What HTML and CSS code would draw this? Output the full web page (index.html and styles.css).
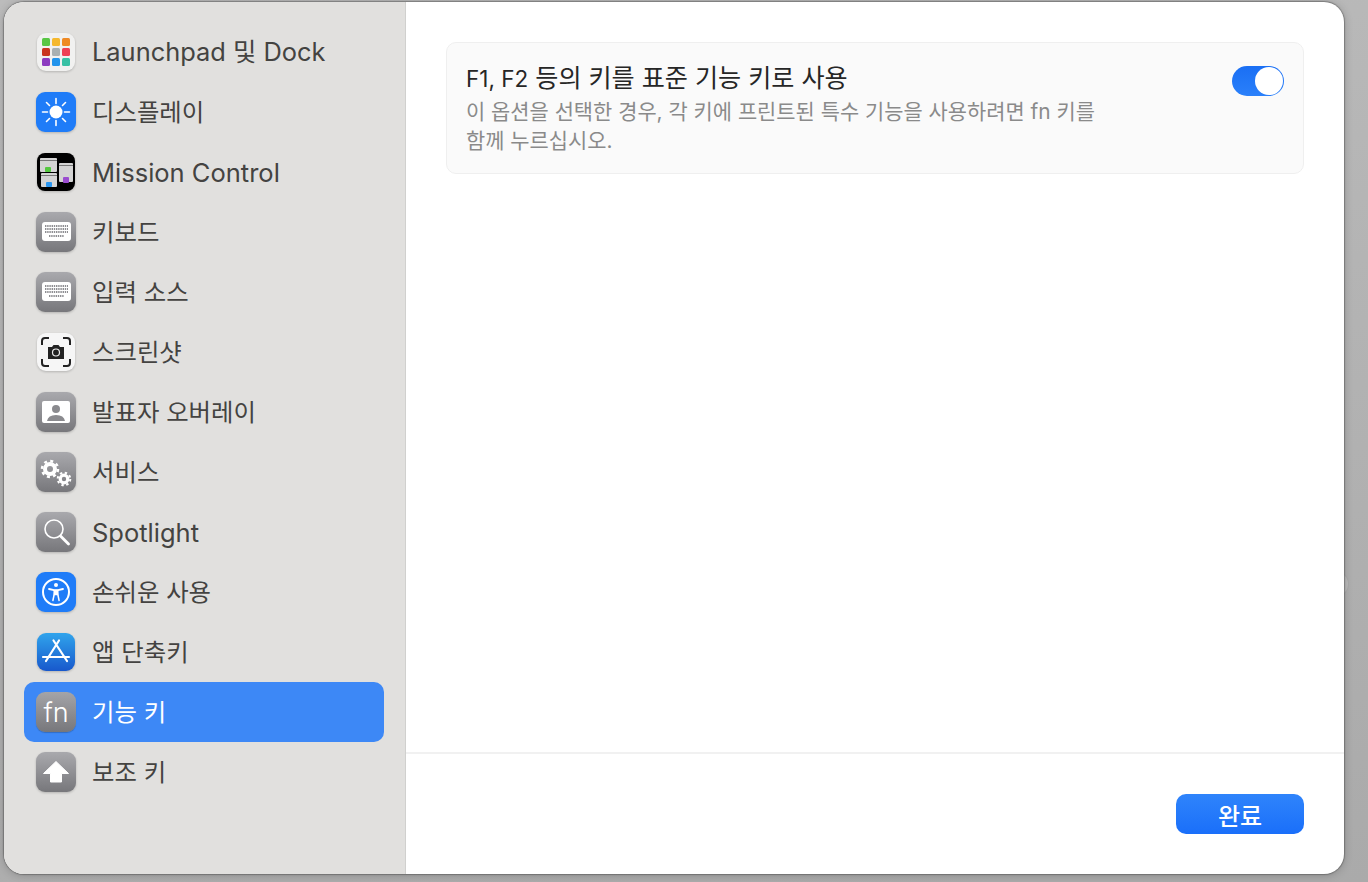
FILE: index.html
```html
<!DOCTYPE html>
<html lang="ko">
<head>
<meta charset="utf-8">
<title>기능 키</title>
<link rel="stylesheet" href="styles.css">
</head>
<body>
	<div class="peek"></div>
	<div class="window">
		<div class="sidebar">
			<div class="item mixed">
				<svg class="icon" viewBox="0 0 40 40">
					<rect x="1" y="1" width="38" height="38" rx="9" fill="#f1f1f0"/>
					<rect x="6" y="6" width="8" height="8" rx="1.500" fill="#58c644"/>
					<rect x="16" y="6" width="8" height="8" rx="1.500" fill="#f5b82e"/>
					<rect x="26" y="6" width="8" height="8" rx="1.500" fill="#ee8a24"/>
					<rect x="6" y="16" width="8" height="8" rx="1.500" fill="#c9351f"/>
					<rect x="16" y="16" width="8" height="8" rx="1.500" fill="#a8b0b2"/>
					<rect x="26" y="16" width="8" height="8" rx="1.500" fill="#ee4054"/>
					<rect x="6" y="26" width="8" height="8" rx="1.500" fill="#8c3cc0"/>
					<rect x="16" y="26" width="8" height="8" rx="1.500" fill="#2294ec"/>
					<rect x="26" y="26" width="8" height="8" rx="1.500" fill="#38c0a4"/>
				</svg>
				<span>Launchpad 및 Dock</span>
			</div>
			<div class="item">
				<svg class="icon" viewBox="0 0 40 40">
					<rect width="40" height="40" rx="9" fill="#1f7cf8"/>
					<circle cx="20" cy="20" r="6.500" fill="#fff"/>
					<path d="M20 6.500v5M20 28.500v5M6.500 20h5M28.500 20h5M10.500 10.500l3 3M26.500 26.500l3 3M29.500 10.500l-3 3M13.500 26.500l-3 3" stroke="#fff" stroke-width="1.600" stroke-linecap="round"/>
				</svg>
				<span>디스플레이</span>
			</div>
			<div class="item latin">
				<svg class="icon" viewBox="0 0 40 40">
					<rect x="1" y="1" width="38" height="38" rx="8" fill="#000"/>
					<rect x="4" y="6" width="17" height="14" rx="1" fill="#d4d4d4"/>
					<rect x="4" y="8" width="17" height="1" fill="#777"/>
					<rect x="5" y="21" width="16" height="14" rx="1" fill="#d4d4d4"/>
					<rect x="5" y="23" width="16" height="1" fill="#777"/>
					<rect x="23" y="11" width="14" height="19" rx="1" fill="#d4d4d4"/>
					<rect x="23" y="13" width="14" height="1" fill="#777"/>
					<rect x="9" y="15" width="6" height="5" rx="1" fill="#55c840"/>
					<rect x="10" y="30" width="6" height="5" rx="1" fill="#2a96f0"/>
					<rect x="27" y="25" width="6" height="6" rx="1" fill="#9a4cd0"/>
				</svg>
				<span>Mission Control</span>
			</div>
			<div class="item">
				<svg class="icon" viewBox="0 0 40 40">
					<rect width="40" height="40" rx="9" fill="url(#grey)"/>
					<rect x="6" y="10" width="29" height="19" rx="3" fill="#fff"/>
					<path d="M9 14h23M9 17h23M9 20h23M13 24h15" stroke="#8e8e92" stroke-width="1.800" stroke-dasharray="1.400 .8"/>
				</svg>
				<span>키보드</span>
			</div>
			<div class="item">
				<svg class="icon" viewBox="0 0 40 40">
					<rect width="40" height="40" rx="9" fill="url(#grey)"/>
					<rect x="6" y="10" width="29" height="19" rx="3" fill="#fff"/>
					<path d="M9 14h23M9 17h23M9 20h23M13 24h15" stroke="#8e8e92" stroke-width="1.800" stroke-dasharray="1.400 .8"/>
				</svg>
				<span>입력 소스</span>
			</div>
			<div class="item">
				<svg class="icon" viewBox="0 0 40 40">
					<rect x="1" y="1" width="38" height="38" rx="9" fill="#f6f6f6"/>
					<path d="M6 13V9q0-3 3-3h4M27 6h4q3 0 3 3v4M34 27v4q0 3-3 3h-4M13 34H9q-3 0-3-3v-4" fill="none" stroke="#222" stroke-width="2"/>
					<path d="M12 15h4l1.500-2h5l1.500 2h4v12H12z" fill="#222"/>
					<circle cx="20" cy="20.500" r="3.500" fill="#222" stroke="#eee" stroke-width="1.200"/>
				</svg>
				<span>스크린샷</span>
			</div>
			<div class="item">
				<svg class="icon" viewBox="0 0 40 40">
					<rect width="40" height="40" rx="9" fill="url(#grey)"/>
					<rect x="6" y="9" width="28" height="22" rx="2" fill="#fff"/>
					<circle cx="20" cy="17" r="4" fill="#8a8a8e"/>
					<path d="M11 29q1-6 9-6t9 6z" fill="#8a8a8e"/>
				</svg>
				<span>발표자 오버레이</span>
			</div>
			<div class="item">
				<svg class="icon" viewBox="0 0 40 40">
					<rect width="40" height="40" rx="9" fill="url(#grey)"/>
					<circle cx="14" cy="17" r="5" fill="none" stroke="#fff" stroke-width="4"/>
					<circle cx="14" cy="17" r="8" fill="none" stroke="#fff" stroke-width="2.500" stroke-dasharray="3 3.280"/>
					<circle cx="28" cy="27" r="3.800" fill="none" stroke="#fff" stroke-width="3.200"/>
					<circle cx="28" cy="27" r="6.300" fill="none" stroke="#fff" stroke-width="2" stroke-dasharray="2.400 2.550"/>
				</svg>
				<span>서비스</span>
			</div>
			<div class="item latin">
				<svg class="icon" viewBox="0 0 40 40">
					<rect width="40" height="40" rx="9" fill="url(#grey)"/>
					<circle cx="18" cy="17" r="9" fill="none" stroke="#fff" stroke-width="1.600"/>
					<path d="M24.500 24l8 8" stroke="#fff" stroke-width="2.800" stroke-linecap="round"/>
				</svg>
				<span>Spotlight</span>
			</div>
			<div class="item">
				<svg class="icon" viewBox="0 0 40 40">
					<rect width="40" height="40" rx="9" fill="#1f7cf8"/>
					<circle cx="20" cy="20" r="13" fill="none" stroke="#fff" stroke-width="2"/>
					<circle cx="20" cy="13" r="2" fill="#fff"/>
					<path d="M13 17l5 1.200h4l5-1.200" fill="none" stroke="#fff" stroke-width="1.800" stroke-linecap="round" stroke-linejoin="round"/>
					<path d="M18.200 18.500v4l-1.300 6M21.800 18.500v4l1.300 6M18.500 18.500h3v4h-3z" fill="#fff" stroke="#fff" stroke-width="1.500" stroke-linecap="round"/>
				</svg>
				<span>손쉬운 사용</span>
			</div>
			<div class="item">
				<svg class="icon" viewBox="0 0 40 40">
					<rect x="1" y="1" width="38" height="38" rx="9" fill="url(#store)"/>
					<path d="M17.500 8.500L31 29M23 8.500L10 29M7 25h26" fill="none" stroke="#fff" stroke-width="2.200" stroke-linecap="round"/>
				</svg>
				<span>앱 단축키</span>
			</div>
			<div class="item selected">
				<div class="fn-icon">fn</div>
				<span>기능 키</span>
			</div>
			<div class="item">
				<svg class="icon" viewBox="0 0 40 40">
					<rect width="40" height="40" rx="9" fill="url(#grey)"/>
					<path d="M20 9.500l12.500 12h-7V30h-11v-8.500h-7z" fill="#fff" stroke="#fff" stroke-width="1" stroke-linejoin="round"/>
				</svg>
				<span>보조 키</span>
			</div>
		</div>

		<div class="main">
			<div class="content">
				<div class="card">
					<div class="card-text">
						<div class="card-title"><span class="card-fkeys">F1, F2</span> 등의 키를 표준 기능 키로 사용</div>
						<div class="card-desc">이 옵션을 선택한 경우, 각 키에 프린트된 특수 기능을 사용하려면 fn 키를 함께 누르십시오.</div>
					</div>
					<div class="toggle"><div class="knob"></div></div>
				</div>
			</div>
			<div class="footer">
				<button class="done">완료</button>
			</div>
		</div>
	</div>

	<svg class="defs" width="0" height="0">
		<defs>
			<linearGradient id="grey" x1="0" y1="0" x2="0" y2="1">
				<stop offset="0" stop-color="#a9a9ad"/>
				<stop offset="1" stop-color="#77777b"/>
			</linearGradient>
			<linearGradient id="store" x1="0" y1="0" x2="0" y2="1">
				<stop offset="0" stop-color="#30a4ec"/>
				<stop offset="1" stop-color="#1858cc"/>
			</linearGradient>
		</defs>
	</svg>
</body>
</html>
```

FILE: styles.css
```css
*{
	box-sizing: border-box;
	margin: 0;
	padding: 0;
}

body{
	position: relative;
	width: 1368px;
	height: 882px;
	overflow: hidden;
	padding: 2px 24px 8px 4px;
	background: linear-gradient(170deg, #bcbcbc, #aaaaaa);
	font-family: "Inter", "Noto Sans CJK KR", sans-serif;
}

/* something of the desktop showing behind the window */
.peek{
	position: absolute;
	left: 1323px;
	top: 571px;
	width: 26px;
	height: 26px;
	border-radius: 50%;
	background: #bababa;
	border: 1px solid rgba(0, 0, 0, 0.08);
}

.window{
	position: relative;
	display: flex;
	width: 1340px;
	height: 872px;
	border-radius: 20px;
	overflow: hidden;
	background: #fff;
	box-shadow: 0 0 1px 1px rgba(60, 60, 60, 0.4), 0 1px 10px rgba(0, 0, 0, 0.22);
}

.sidebar{
	display: flex;
	flex-direction: column;
	width: 402px;
	padding: 20px 21px 0 20px;
	background: #e1e0de;
	border-right: 1px solid #d0d0ce;
}

.item{
	display: flex;
	align-items: center;
	gap: 16px;
	height: 60px;
	padding-left: 12px;
	border-radius: 10px;
	font-size: 24.400px;
	color: #444341;
}

.item span{
	padding-bottom: 4px;
}

.item.latin{
	font-size: 25.500px;
}

.item.latin span{
	padding: 0;
}

.item.mixed{
	font-size: 25.400px;
}

.item.selected{
	background: #3d88f6;
	color: #fff;
}

.icon{
	flex: none;
	width: 40px;
	height: 40px;
	filter: drop-shadow(0 1px 1px rgba(0, 0, 0, 0.2));
}

.fn-icon{
	flex: none;
	display: flex;
	align-items: center;
	justify-content: center;
	width: 40px;
	height: 40px;
	border-radius: 9px;
	background: linear-gradient(#a4a4a8, #77777b);
	color: #fff;
	font-size: 27px;
	font-weight: 300;
	box-shadow: 0 1px 1px rgba(0, 0, 0, 0.2);
}

.main{
	flex: 1;
	display: flex;
	flex-direction: column;
}

.content{
	flex: 1;
	padding: 40px;
}

.card{
	display: flex;
	justify-content: space-between;
	height: 132px;
	padding: 20px 19px 0 19px;
	background: #fafafa;
	border: 1px solid #efefef;
	border-radius: 10px;
}

.card-text{
	width: 640px;
}

.card-title{
	font-size: 25.100px;
	line-height: 30px;
	color: #262626;
}

.card-fkeys{
	font-size: 22.500px;
}

.card-desc{
	margin-top: 3px;
	font-size: 20.900px;
	line-height: 29px;
	color: #8a8a8a;
}

.toggle{
	display: flex;
	justify-content: flex-end;
	width: 52px;
	height: 30px;
	margin-top: 3px;
	padding: 1px;
	border-radius: 15px;
	background: linear-gradient(#1a6ff4, #2a80fa);
}

.knob{
	width: 28px;
	height: 28px;
	border-radius: 50%;
	background: #fff;
}

.footer{
	display: flex;
	justify-content: flex-end;
	align-items: flex-start;
	height: 122px;
	padding: 40px 40px 0 0;
	border-top: 2px solid #f1f1f1;
}

.done{
	width: 128px;
	height: 40px;
	border: 0;
	border-radius: 10px;
	background: linear-gradient(#2f84fb, #1a6ffa);
	color: #fff;
	font-family: inherit;
	font-size: 24px;
	font-weight: 500;
}

.defs{
	position: absolute;
}
```
